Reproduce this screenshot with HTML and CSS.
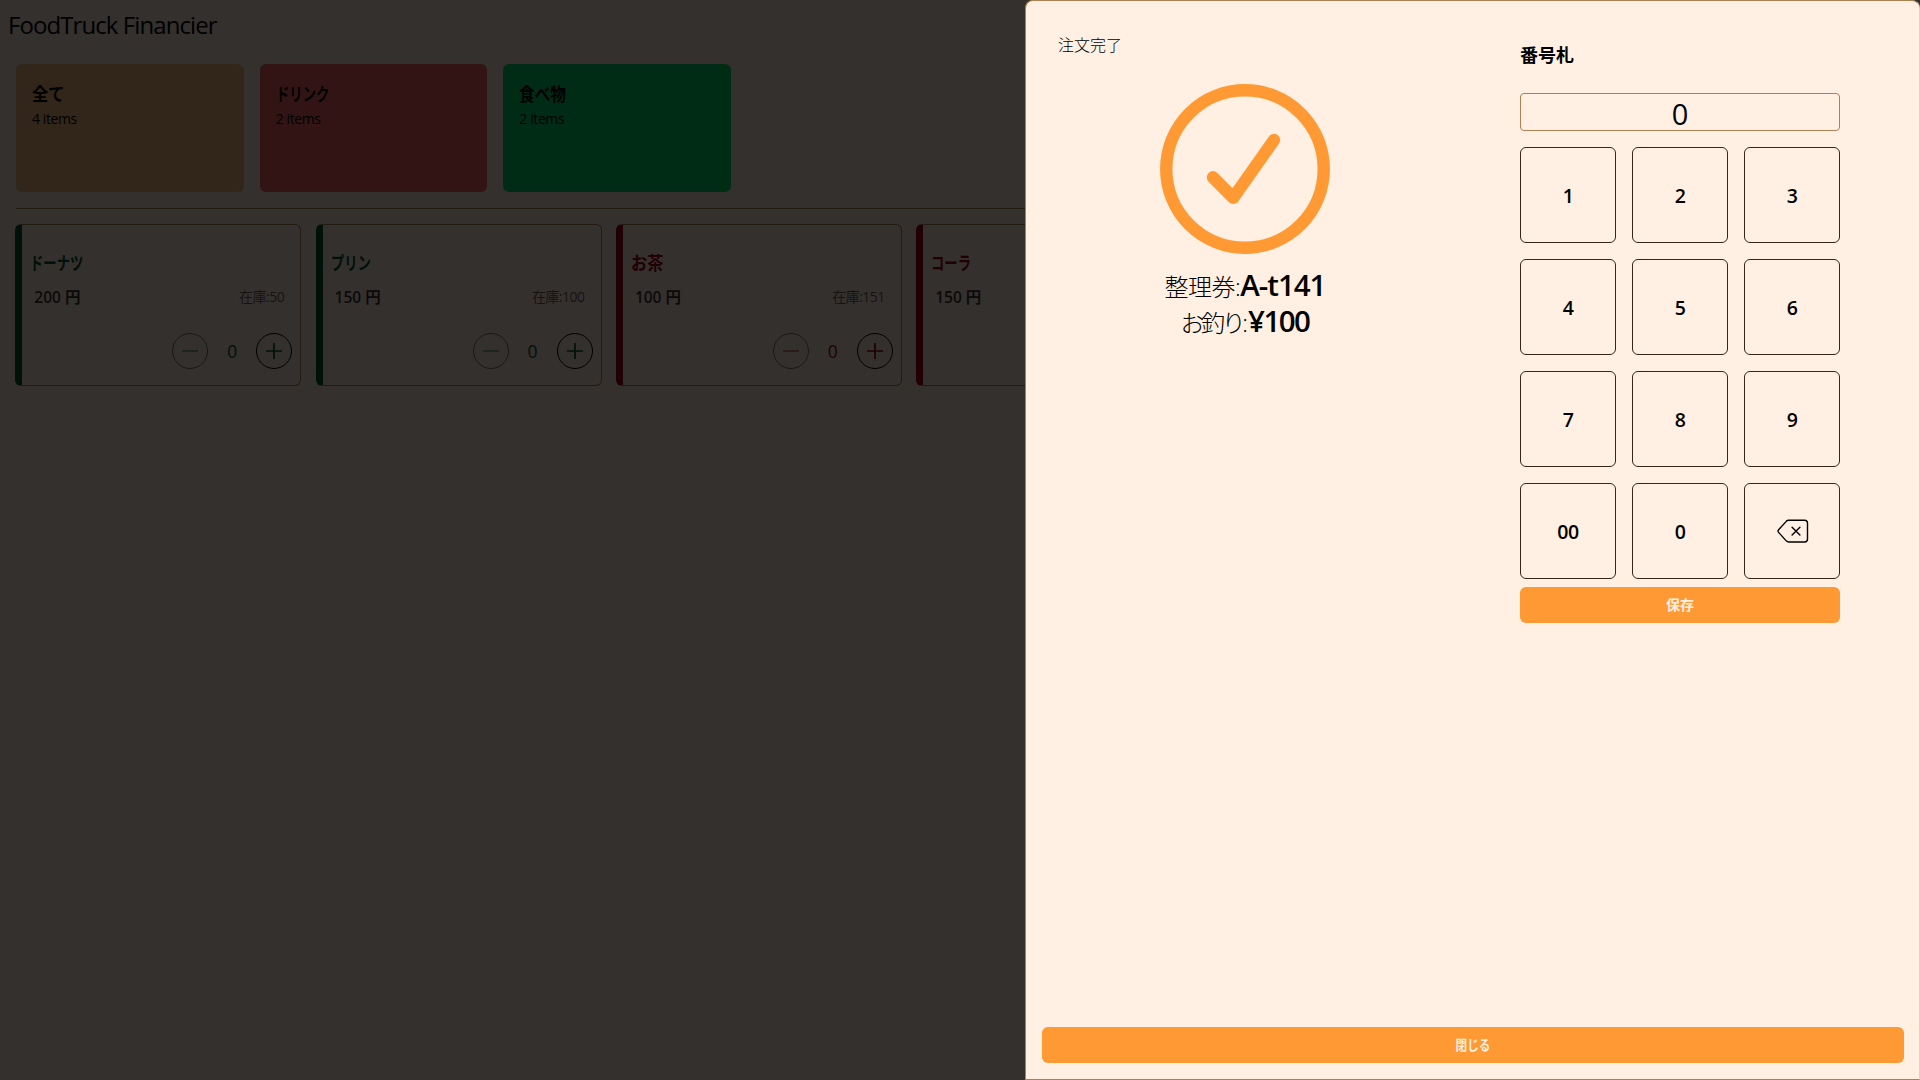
FILE: index.html
```html
<!DOCTYPE html>
<html lang="ja">
<head>
<meta charset="utf-8">
<title>FoodTruck Financier</title>
<link rel="stylesheet" href="styles.css">
</head>
<body>
<svg class="defs" aria-hidden="true">
  <symbol id="minus" viewBox="0 0 24 24"><path d="M4 12h16"/></symbol>
  <symbol id="plus" viewBox="0 0 24 24"><path d="M4 12h16M12 4v16"/></symbol>
</svg>

<div class="app">
  <header class="app-header">FoodTruck Financier</header>
  <main class="content">
    <section class="categories">
      <div class="category all"><h2><span class="ja short">全て</span></h2><p>4 items</p></div>
      <div class="category drink"><h2><span class="ja kana">ドリンク</span></h2><p>2 items</p></div>
      <div class="category food"><h2><span class="ja mixed">食べ物</span></h2><p>2 items</p></div>
    </section>
    <section class="products">
      <article class="product green">
        <h3><span class="ja kana">ドーナツ</span></h3>
        <div class="info"><span class="price">200 円</span><span class="stock">在庫:50</span></div>
        <div class="stepper"><button class="round off"><svg><use href="#minus"/></svg></button><span class="qty">0</span><button class="round"><svg><use href="#plus"/></svg></button></div>
      </article>
      <article class="product green">
        <h3><span class="ja kana">プリン</span></h3>
        <div class="info"><span class="price">150 円</span><span class="stock">在庫:100</span></div>
        <div class="stepper"><button class="round off"><svg><use href="#minus"/></svg></button><span class="qty">0</span><button class="round"><svg><use href="#plus"/></svg></button></div>
      </article>
      <article class="product red">
        <h3><span class="ja short">お茶</span></h3>
        <div class="info"><span class="price">100 円</span><span class="stock">在庫:151</span></div>
        <div class="stepper"><button class="round off"><svg><use href="#minus"/></svg></button><span class="qty">0</span><button class="round"><svg><use href="#plus"/></svg></button></div>
      </article>
      <article class="product red">
        <h3><span class="ja kana">コーラ</span></h3>
        <div class="info"><span class="price">150 円</span></div>
      </article>
    </section>
  </main>
</div>

<div class="overlay">
  <div class="drawer">
    <div class="drawer-body">
      <section class="result">
        <h1>注文完了</h1>
        <svg class="done" viewBox="-85 -85 170 170"><circle r="78.75"/><path d="M-32 8.3L-11.7 28.8L29 -29"/></svg>
        <p class="line"><span class="ticket-label">整理券:</span><strong class="ticket">A-t141</strong></p>
        <p class="line"><span class="change-label">お釣り</span>:<strong class="change">¥100</strong></p>
      </section>
      <section class="tag">
        <h2>番号札</h2>
        <div class="display">0</div>
        <div class="keys">
          <button>1</button><button>2</button><button>3</button>
          <button>4</button><button>5</button><button>6</button>
          <button>7</button><button>8</button><button>9</button>
          <button>00</button><button>0</button>
          <button class="erase"><svg class="backspace" viewBox="0 0 32 24"><path d="M11.6 1.2H27.6A2.9 2.9 0 0 1 30.5 4.1V20.1A2.9 2.9 0 0 1 27.6 23H11.6A2.9 2.9 0 0 1 9.5 22.1L1.6 13.4A2 2 0 0 1 1.6 10.8L9.5 2.1A2.9 2.9 0 0 1 11.6 1.2ZM15.1 8.2L22.9 16M22.9 8.2L15.1 16"/></svg></button>
        </div>
        <button class="primary">保存</button>
      </section>
    </div>
    <button class="primary close"><span class="close-label">閉じる</span></button>
  </div>
</div>
</body>
</html>
```
FILE: styles.css
```css
* { box-sizing: border-box; margin: 0; padding: 0; }

body {
  width: 1920px;
  height: 1080px;
  overflow: hidden;
  background: #fff0e3;
  color: #000;
  font-family: "Open Sans", "Noto Sans CJK JP", sans-serif;
  font-size: 16px;
}

button { font: inherit; color: inherit; background: none; border: 0; }
.defs { display: none; }

.ja { display: inline-block; transform-origin: left center; }
.kana { transform: scaleX(0.74); }
.mixed { transform: scaleX(0.87); }
.short { transform: scaleX(0.9); }

/* Register page */
.app-header { height: 52px; padding-left: 8px; font-size: 24px; line-height: 50px; letter-spacing: -0.92px; }
.content { padding: 12px 0 0 16px; }

.categories { display: grid; grid-template-columns: repeat(3, 1fr); gap: 16px; width: 715px; height: 128px; }
.category { padding: 16px; border-radius: 6px; }
.category h2 { font-size: 18px; line-height: 28px; font-weight: 700; }
.category p { font-size: 14px; line-height: 21px; letter-spacing: -0.4px; }
.all { background: #fabe87; }
.drink { background: #fa6469; }
.food { background: #00dc6e; }

.products {
  display: grid;
  grid-template-columns: repeat(4, 285.6px);
  gap: 14.7px;
  margin-top: 16px;
  padding-top: 15px;
  border-top: 1px solid #ad8053;
}
.product {
  height: 162px;
  margin: 0 0.3px 0 -0.7px;
  padding: 26px 8px 0 8px;
  border: 1px solid #ad8053;
  border-left: 7px solid currentColor;
  border-radius: 6px;
}
.green { color: #00552d; }
.red { color: #a0000a; }
.product h3 { font-size: 18px; line-height: 25px; font-weight: 700; }
.info { display: flex; justify-content: space-between; padding: 7px 8px 0 4px; line-height: 28px; color: #000c; }
.price { font-weight: 600; font-size: 15.5px; }
.stock { font-size: 14px; letter-spacing: -0.5px; color: #0009; }
.stepper { display: flex; justify-content: flex-end; align-items: center; margin-top: 22px; }
.round { width: 36px; height: 36px; border: 1px solid #000; border-radius: 50%; display: grid; place-items: center; }
.round svg { width: 24px; height: 24px; stroke: currentColor; stroke-width: 1.7; fill: none; }
.off { opacity: 0.5; }
.qty { width: 48px; text-align: center; font-size: 17.5px; }

/* Order drawer */
.overlay { position: absolute; inset: 0; background: rgba(0, 0, 0, 0.8); display: flex; justify-content: flex-end; }
.drawer {
  width: 895px;
  height: 1080px;
  padding: 0 15px 16px 16px;
  display: flex;
  flex-direction: column;
  background: #fff0e3;
  border: 1px solid #ad8053;
  border-right-color: #e3d3bd;
  border-radius: 8px 8px 0 0;
}
.drawer-body { flex: 1; display: flex; }
.result { width: 406px; display: flex; flex-direction: column; align-items: center; }
.result h1 { align-self: flex-start; padding-left: 16px; margin-top: 32px; font-size: 16px; line-height: 24px; font-weight: 300; }
.done { width: 170px; height: 170px; margin: 27px 0 13px; fill: none; stroke: #ff9933; stroke-width: 12.4; stroke-linecap: round; stroke-linejoin: round; }
.line { font-size: 24px; line-height: 36px; height: 36px; font-weight: 300; white-space: nowrap; display: flex; align-items: baseline; }
.line strong { font-size: 29.5px; font-weight: 600; }
.ticket-label { letter-spacing: -0.5px; }
.ticket { letter-spacing: -1px; }
.change { letter-spacing: -1.5px; }
.change-label { letter-spacing: -3.4px; }

.tag { width: 320px; margin-left: 72px; display: flex; flex-direction: column; }
.tag h2 { margin-top: 40px; font-size: 18px; line-height: 28px; font-weight: 700; }
.display { height: 38px; margin: 24px 0 16px; border: 1px solid #ad8053; border-radius: 4px; text-align: center; font-size: 29px; line-height: 39px; }
.keys { display: grid; grid-template-columns: repeat(3, 96px); grid-auto-rows: 96px; gap: 16px; }
.keys button { border: 1px solid #33261b; border-radius: 6px; font-size: 19.5px; font-weight: 600; display: grid; place-items: center; letter-spacing: -0.4px; }
.keys .erase { padding-left: 2px; }
.backspace { width: 32px; height: 24px; fill: none; stroke: #000; stroke-width: 1.4; stroke-linecap: round; stroke-linejoin: round; }
.primary { height: 36px; margin-top: 8px; padding-bottom: 2px; border-radius: 6px; background: #ff9933; color: #fff0e3; font-size: 14px; font-weight: 700; }
.close { flex: none; }
.close-label { display: inline-block; transform: scaleX(0.83); }
```
